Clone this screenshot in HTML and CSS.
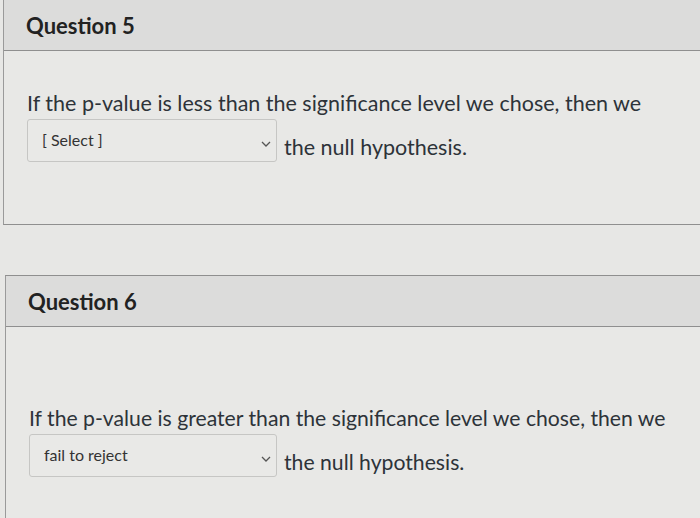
FILE: index.html
```html
<!DOCTYPE html>
<html>
<head>
<meta charset="utf-8">
<link rel="stylesheet" href="styles.css">
</head>
<body>
<div class="page">
  <section class="card card-q5">
    <header class="card-head"><h2 class="card-title">Question 5</h2></header>
    <div class="card-body body-q5">
      <p class="prompt">If the p-value is less than the significance level we chose, then we</p>
      <div class="answer-row">
        <div class="select"><span class="select-text">[ Select ]</span>
          <svg class="chev" width="10" height="6" viewBox="0 0 10 6"><path d="M1 1l4 4 4-4" fill="none" stroke="#555" stroke-width="1.3"/></svg>
        </div>
        <span class="tail">the null hypothesis.</span>
      </div>
    </div>
  </section>
  <section class="card card-q6">
    <header class="card-head"><h2 class="card-title">Question 6</h2></header>
    <div class="card-body body-q6">
      <p class="prompt">If the p-value is greater than the significance level we chose, then we</p>
      <div class="answer-row">
        <div class="select"><span class="select-text">fail to reject</span>
          <svg class="chev" width="10" height="6" viewBox="0 0 10 6"><path d="M1 1l4 4 4-4" fill="none" stroke="#555" stroke-width="1.3"/></svg>
        </div>
        <span class="tail">the null hypothesis.</span>
      </div>
    </div>
  </section>
</div>
</body>
</html>
```
FILE: styles.css
```css
html, body {
  margin: 0;
  padding: 0;
  background: #e7e7e5;
  font-family: Lato, "Liberation Sans", sans-serif;
  color: #2d3339;
}
.page {
  width: 700px;
  height: 518px;
  overflow: hidden;
}
.card {
  border-left: 1px solid #9a9a9a;
  border-bottom: 1px solid #8f8f8f;
  background: #e8e8e6;
}
.card-q5 {
  margin-left: 3px;
}
.card-q6 {
  margin-left: 5px;
  margin-top: 50px;
  border-top: 1px solid #8f8f8f;
}
.card-head {
  background: #dcdcdb;
  border-bottom: 1px solid #8f8f8f;
  height: 50px;
  display: flex;
  align-items: center;
}
.card-title {
  margin: 0;
  font-size: 22px;
  font-weight: 700;
  color: #222;
  padding-left: 22px;
}
.card-body {
  padding-left: 23px;
}
.body-q5 {
  padding-top: 39px;
  padding-bottom: 62px;
}
.body-q6 {
  padding-top: 78px;
  padding-bottom: 60px;
}
.prompt {
  margin: 0;
  font-size: 21.5px;
  line-height: 26px;
}
.body-q6 .prompt,
.body-q6 .tail {
  font-size: 21.2px;
}
.answer-row {
  display: flex;
  align-items: flex-end;
  margin-top: 3px;
  gap: 7px;
}
.select {
  width: 250px;
  height: 43px;
  border: 1px solid #c6c6c4;
  border-radius: 3px;
  background: #e9e9e7;
  display: flex;
  align-items: center;
  justify-content: space-between;
  padding: 0 5px 0 14px;
  box-sizing: border-box;
}
.body-q6 .select {
  width: 248px;
}
.select-text {
  font-size: 16px;
  color: #333;
  margin-top: -3px;
}
.chev {
  margin-top: 6px;
}
.tail {
  font-size: 21.5px;
  line-height: 26px;
  margin-bottom: 2px;
}
```
